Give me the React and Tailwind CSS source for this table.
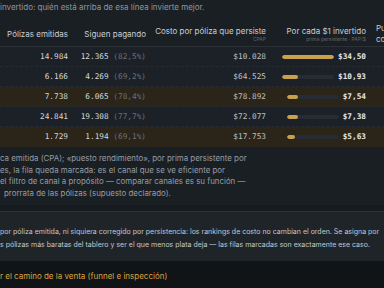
import React from "react";

const rows = [
  { a: "14.984", b: "12.365", p: "(82,5%)", c: "$10.028", v: 34.5, vs: "$34,50", hl: false },
  { a: "6.166", b: "4.269", p: "(69,2%)", c: "$64.525", v: 10.93, vs: "$10,93", hl: false },
  { a: "7.738", b: "6.065", p: "(78,4%)", c: "$78.892", v: 7.54, vs: "$7,54", hl: true },
  { a: "24.841", b: "19.308", p: "(77,7%)", c: "$72.077", v: 7.38, vs: "$7,38", hl: false },
  { a: "1.729", b: "1.194", p: "(69,1%)", c: "$17.753", v: 5.63, vs: "$5,63", hl: true },
];

const grid = "grid grid-cols-[72px_78px_120px_100px_60px]";
const mono = "font-['DejaVu_Sans_Mono',monospace] text-[7.75px]";

export default function App() {
  return (
    <div className="w-[384px] h-[288px] overflow-hidden bg-[#111417] font-['Inter',sans-serif]">
      <div className="bg-[#1a1f24] pb-[6px]">
        <p className="pt-[2px] leading-[10px] text-[8px] text-[#8f969d] whitespace-nowrap">
          invertido: quién está arriba de esa línea invierte mejor.
        </p>
        <div className="mt-[10px] w-[430px]">
          <div className={`${grid} h-[25px] items-center border-b border-[#2a3036] text-[8px] text-[#c9ced3]`}>
            <div className="pr-[4px] text-right leading-[10px] whitespace-nowrap">Pólizas emitidas</div>
            <div className="pr-[4px] text-right leading-[10px] whitespace-nowrap">Siguen pagando</div>
            <div className="pr-[4px] text-right whitespace-nowrap flex flex-col items-end">
              <span className="leading-[10px]">Costo por póliza que persiste</span>
              <span className="leading-[7px] text-[5px] text-[#5d656d]">CPAP</span>
            </div>
            <div className="pr-[4px] text-right whitespace-nowrap flex flex-col items-end">
              <span className="leading-[10px]">Por cada $1 invertido</span>
              <span className="leading-[7px] text-[5px] text-[#5d656d]">prima persistente · PAP/$</span>
            </div>
            <div className="pl-[6px] whitespace-nowrap flex flex-col leading-[11px]">
              <span>Puesto por</span>
              <span>costo</span>
            </div>
          </div>
          {rows.map((r, i) => (
            <div
              key={i}
              className={`${grid} h-[20px] items-center ${
                i < rows.length - 1 ? "border-b border-dashed border-[#262c32]" : ""
              } ${r.hl ? "bg-[#2b2418]" : "bg-[#1b2126]"}`}
            >
              <div className={`pr-[4px] text-right ${mono} text-[#d3d7db]`}>{r.a}</div>
              <div className={`pr-[4px] text-right ${mono} whitespace-nowrap`}>
                <span className="text-[#d3d7db]">{r.b}</span>{" "}
                <span className="text-[#6a727a]">{r.p}</span>
              </div>
              <div className={`pr-[4px] text-right ${mono} text-[#bcc2c8]`}>{r.c}</div>
              <div className="pr-[4px] flex items-center justify-end gap-[4px]">
                <div className="w-[52px] h-[4px] rounded-full bg-[#252c33] overflow-hidden">
                  <div
                    className="h-full rounded-full bg-[#c9a04c]"
                    style={{ width: `${(r.v / 34.5) * 100}%` }}
                  />
                </div>
                <span className={`${mono} font-bold text-[#e4e7ea]`}>{r.vs}</span>
              </div>
              <div />
            </div>
          ))}
        </div>
        <div className="mt-[6px] text-[7.9px] leading-[11.5px] text-[#979ea5] whitespace-nowrap">
          <div>ca emitida (CPA); «puesto rendimiento», por prima persistente por</div>
          <div>es, la fila queda marcada: es el canal que se ve eficiente por</div>
          <div>el filtro de canal a propósito — comparar canales es su función —</div>
          <div className="pl-[4px]">prorrata de las pólizas (supuesto declarado).</div>
        </div>
      </div>
      <div className="h-[6px] bg-[#171b1f]" />
      <div className="bg-[#1f2429] border-t border-[#2b3137] pt-[14px] pb-[10px] text-[7px] leading-[12.5px] text-[#c3c8cd] whitespace-nowrap">
        <div>por póliza emitida, ni siquiera corregido por persistencia: los rankings de costo no cambian el orden. Se asigna por</div>
        <div>s pólizas más baratas del tablero y ser el que menos plata deja — las filas marcadas son exactamente ese caso.</div>
      </div>
      <div className="mt-[10px] text-[8px] leading-[10px] text-[#d6a243] whitespace-nowrap">
        r el camino de la venta (funnel e inspección)
      </div>
    </div>
  );
}
